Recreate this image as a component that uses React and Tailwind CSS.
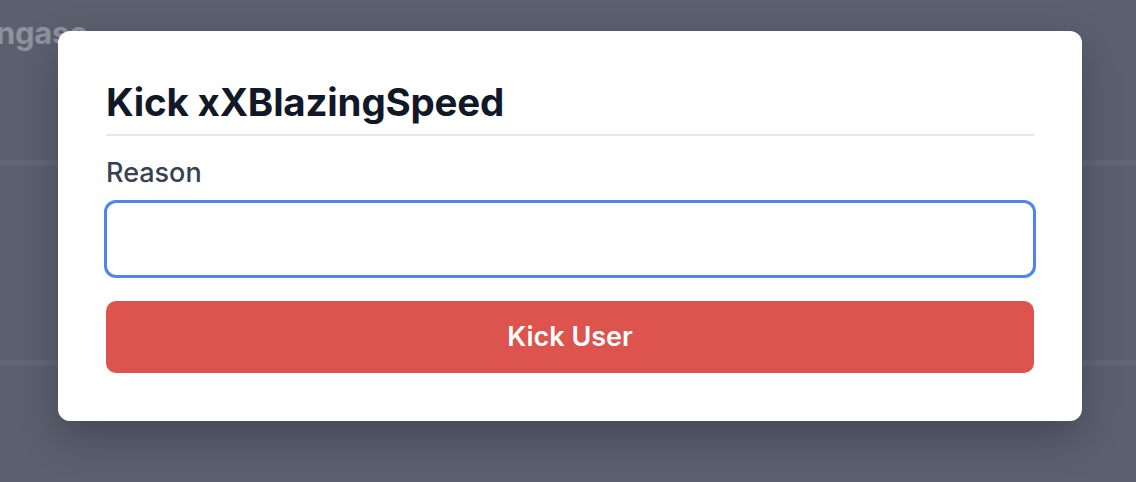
import React from "react";

const App = () => {
  return (
    <div
      className="relative w-full h-[482px] overflow-hidden bg-[#5b6070]"
      style={{ fontFamily: "Inter, 'Noto Sans', sans-serif" }}
    >
      {/* page behind the overlay */}
      <div className="flex flex-col">
        <div className="h-[160px] pt-[14px]">
          <h2 className="-ml-[4px] text-[31px] font-bold text-[#8e929d] leading-[38px] tracking-[-0.3px]">
            ngaso
          </h2>
        </div>
        <div className="h-[6px] bg-[#626776]" />
        <div className="h-[194px]" />
        <div className="h-[6px] bg-[#626776]" />
      </div>

      {/* modal */}
      <div className="absolute left-[58px] top-[31px] w-[1024px] rounded-[12px] bg-white px-[48px] pt-[48px] pb-[48px] shadow-[0_16px_40px_rgba(0,0,0,0.25)]">
        <h1 className="text-[38.5px] font-bold leading-[46px] text-[#111827] tracking-[-0.2px]">
          Kick xXBlazingSpeed
        </h1>
        <div className="mt-[9px] h-[2px] bg-[#e5e7eb]" />
        <label className="mt-[20px] block text-[27px] font-medium leading-[34px] text-[#374151]">
          Reason
        </label>
        <input
          type="text"
          className="mt-[10px] block h-[78px] -mx-[2px] w-[calc(100%+4px)] rounded-[12px] border-[3px] border-[#4f85ec] outline-none px-4 text-[24px]"
        />
        <button className="mt-[23px] flex w-full h-[72px] items-center justify-center rounded-[10px] bg-[#dd534d] text-[27px] font-semibold text-white">
          Kick User
        </button>
      </div>
    </div>
  );
};

export default App;
